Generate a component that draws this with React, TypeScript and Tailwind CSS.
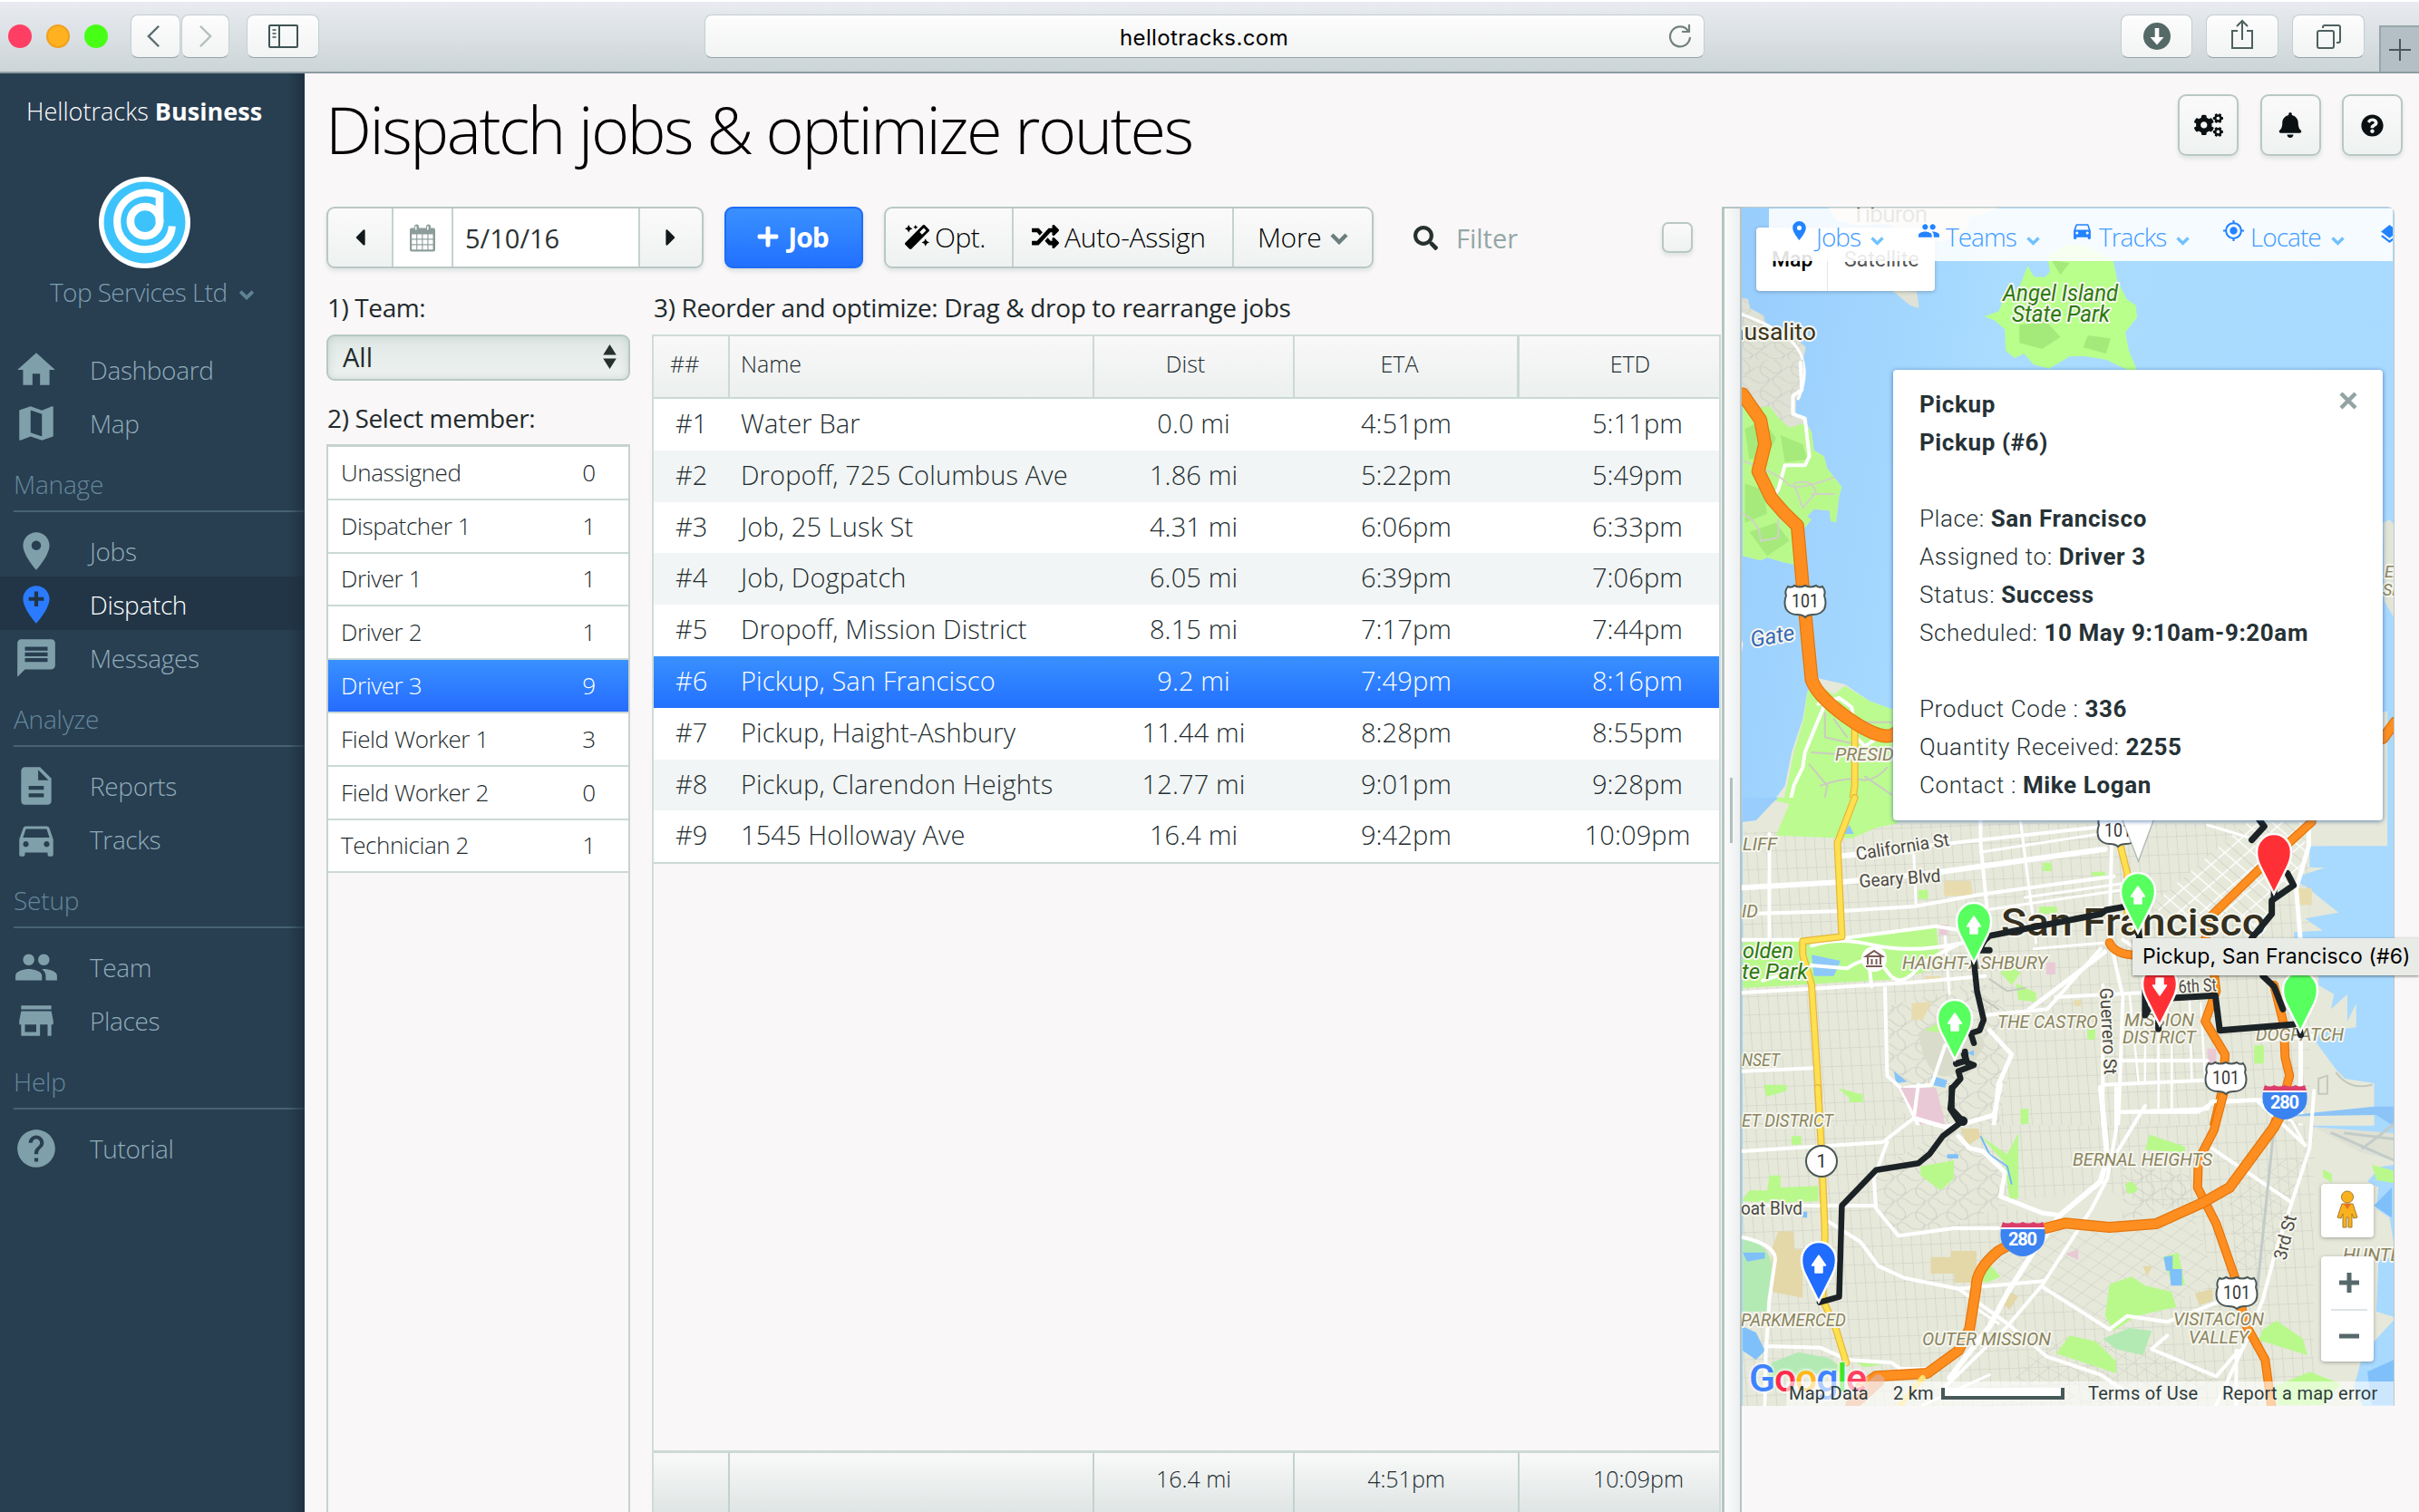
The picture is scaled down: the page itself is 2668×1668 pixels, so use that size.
import React from "react";
import { FaCogs, FaBell, FaQuestionCircle, FaMagic, FaRandom, FaSearch, FaCaretLeft, FaCaretRight, FaPlus } from "react-icons/fa";

const PATHS: Record<string, string> = {
  home: "M10 20v-6h4v6h5v-8h3L12 3 2 12h3v8z",
  map: "M20.5 3l-.16.03L15 5.1 9 3 3.36 4.9c-.21.07-.36.25-.36.48V20.5c0 .28.22.5.5.5l.16-.03L9 18.9l6 2.1 5.64-1.9c.21-.07.36-.25.36-.48V3.5c0-.28-.22-.5-.5-.5zM15 19l-6-2.11V5l6 2.11V19z",
  place: "M12 2C8.13 2 5 5.13 5 9c0 5.25 7 13 7 13s7-7.75 7-13c0-3.87-3.13-7-7-7zm0 9.5c-1.38 0-2.5-1.12-2.5-2.5s1.12-2.5 2.5-2.5 2.5 1.12 2.5 2.5-1.12 2.5-2.5 2.5z",
  placeAdd: "M12 2C8.14 2 5 5.14 5 9c0 5.25 7 13 7 13s7-7.75 7-13c0-3.86-3.14-7-7-7zm4 8h-3v3h-2v-3H8V8h3V5h2v3h3v2z",
  message: "M20 2H4c-1.1 0-1.99.9-1.99 2L2 22l4-4h14c1.1 0 2-.9 2-2V4c0-1.1-.9-2-2-2zm-2 12H6v-2h12v2zm0-3H6V9h12v2zm0-3H6V6h12v2z",
  report: "M14 2H6c-1.1 0-1.99.9-1.99 2L4 20c0 1.1.89 2 1.99 2H18c1.1 0 2-.9 2-2V8l-6-6zm2 16H8v-2h8v2zm0-4H8v-2h8v2zm-3-5V3.5L18.5 9H13z",
  car: "M18.92 6.01C18.72 5.42 18.16 5 17.5 5h-11c-.66 0-1.21.42-1.42 1.01L3 12v8c0 .55.45 1 1 1h1c.55 0 1-.45 1-1v-1h12v1c0 .55.45 1 1 1h1c.55 0 1-.45 1-1v-8l-2.08-5.99zM6.5 16c-.83 0-1.5-.67-1.5-1.5S5.67 13 6.5 13s1.5.67 1.5 1.5S7.33 16 6.5 16zm11 0c-.83 0-1.5-.67-1.5-1.5s.67-1.5 1.5-1.5 1.5.67 1.5 1.5-.67 1.5-1.5 1.5zM5 11l1.5-4.5h11L19 11H5z",
  people: "M16 11c1.66 0 2.99-1.34 2.99-3S17.66 5 16 5c-1.66 0-3 1.34-3 3s1.34 3 3 3zm-8 0c1.66 0 2.99-1.34 2.99-3S9.66 5 8 5C6.34 5 5 6.34 5 8s1.34 3 3 3zm0 2c-2.33 0-7 1.17-7 3.5V19h14v-2.5c0-2.33-4.67-3.5-7-3.5zm8 0c-.29 0-.62.02-.97.05 1.16.84 1.97 1.97 1.97 3.45V19h6v-2.5c0-2.33-4.67-3.5-7-3.5z",
  store: "M20 4H4v2h16V4zm1 10v-2l-1-5H4l-1 5v2h1v6h10v-6h4v6h2v-6h1zm-9 4H6v-4h6v4z",
  help: "M12 2C6.48 2 2 6.48 2 12s4.48 10 10 10 10-4.48 10-10S17.52 2 12 2zm1 17h-2v-2h2v2zm2.07-7.75l-.9.92C13.45 12.9 13 13.5 13 15h-2v-.5c0-1.1.45-2.1 1.17-2.83l1.24-1.26c.37-.36.59-.86.59-1.41 0-1.1-.9-2-2-2s-2 .9-2 2H8c0-2.21 1.79-4 4-4s4 1.79 4 4c0 .88-.36 1.68-.93 2.25z",
  locate: "M12 8c-2.21 0-4 1.79-4 4s1.79 4 4 4 4-1.79 4-4-1.79-4-4-4zm8.94 3A8.994 8.994 0 0 0 13 3.06V1h-2v2.06A8.994 8.994 0 0 0 3.06 11H1v2h2.06A8.994 8.994 0 0 0 11 20.94V23h2v-2.06A8.994 8.994 0 0 0 20.94 13H23v-2h-2.06zM12 19c-3.87 0-7-3.13-7-7s3.13-7 7-7 7 3.13 7 7-3.13 7-7 7z",
  layers: "M11.99 18.54l-7.37-5.73L3 14.07l9 7 9-7-1.63-1.27-7.38 5.74zM12 16l7.36-5.73L21 9l-9-7-9 7 1.63 1.27L12 16z",
};

function Icon({ name, className }: { name: string; className: string }) {
  return (
    <svg viewBox="0 0 24 24" fill="currentColor" className={className}>
      <path d={PATHS[name]} />
    </svg>
  );
}

function Chevron({ className }: { className: string }) {
  return (
    <svg viewBox="0 0 20 14" fill="none" stroke="currentColor" strokeWidth="4.4" className={className}>
      <path d="M2 3l8 8 8-8" />
    </svg>
  );
}

/* ---------- Browser chrome ---------- */

const chromeBtn = "flex h-[48px] items-center justify-center rounded-[8px] border border-[#c3cfd1] border-b-[#93a5a6] bg-linear-to-b from-[#fdfdfd] to-[#f2f3f3] text-[#5a6e6e]";

function BrowserBar() {
  return (
    <div className="flex h-[81px] w-full shrink-0 border-t-2 border-b-2 border-t-white border-b-[#8d9ca3] bg-linear-to-b from-[#e9ebf0] to-[#ccd5d7] pt-[14px]">
      <div className="mt-[11px] ml-[9px] flex gap-[16px]">
        <div className="size-[26px] rounded-full bg-[#ff3e63]" />
        <div className="size-[26px] rounded-full border-2 border-[#f0a020] bg-[#ffb11f]" />
        <div className="size-[26px] rounded-full bg-[#47ff16]" />
      </div>
      <div className={`${chromeBtn} ml-[25px] w-[55px]`}>
        <svg viewBox="0 0 16 26" className="-ml-[4px] h-[26px] w-[15px]" fill="none" stroke="currentColor" strokeWidth="2.6"><path d="M14 1L2 13l12 12" /></svg>
      </div>
      <div className={`${chromeBtn} ml-px w-[53px]`}>
        <svg viewBox="0 0 16 26" className="h-[26px] w-[15px] text-[#b4bfc0]" fill="none" stroke="currentColor" strokeWidth="2.6"><path d="M2 1l12 12L2 25" /></svg>
      </div>
      <div className={`${chromeBtn} ml-[19px] w-[80px]`}>
        <svg viewBox="0 0 33 26" className="h-[26px] w-[33px]" fill="none" stroke="#3f5353" strokeWidth="2"><rect x="1" y="1" width="31" height="24" rx="1" /><path d="M12 1v24" /><path d="M4.5 6h4M4.5 10h4M4.5 14h4" strokeWidth="1.6" /></svg>
      </div>
      <div className={`${chromeBtn} relative ml-[425px] w-[1103px]`}>
        <span className="pt-[3px] pr-[1px] font-[Inter] text-[24px] tracking-[0.4px] text-black">hellotracks.com</span>
        <svg viewBox="0 0 28 30" className="absolute right-[12px] h-[30px] w-[28px]" fill="none" stroke="#74817f" strokeWidth="2.2"><path d="M23 9A11 11 0 1 0 25 16" /><path d="M24 2v8h-8" /></svg>
      </div>
      <div className={`${chromeBtn} ml-[459px] w-[79px]`}>
        <svg viewBox="0 0 30 30" className="size-[30px]"><circle cx="15" cy="15" r="15" fill="#556966" /><path d="M12.700 6h4.600v10h5.200L15 24.500 7.500 16h5.200z" fill="#fff" /></svg>
      </div>
      <div className={`${chromeBtn} ml-[15px] w-[80px]`}>
        <svg viewBox="0 0 26 34" className="-mt-[4px] h-[34px] w-[26px]" fill="none" stroke="#4d615f" strokeWidth="2"><path d="M8 13H2v19h22V13h-6M13 23V2M7 8l6-6 6 6" /></svg>
      </div>
      <div className={`${chromeBtn} ml-[15px] w-[80px]`}>
        <svg viewBox="0 0 27 27" className="size-[27px]" fill="none" stroke="#4d615f" strokeWidth="2"><rect x="1" y="7" width="18" height="19" rx="2" /><path d="M7 4V3q0-2 2-2h15q2 0 2 2v15q0 2-2 2h-2" /></svg>
      </div>
      <div className="mt-[12px] ml-[16px] flex flex-1 items-center justify-center border-t-2 border-l-2 border-[#97a6aa] bg-[#b3bfc4]">
        <svg viewBox="0 0 24 24" className="size-[24px]" stroke="#47575a" strokeWidth="2"><path d="M12 0v24M0 12h24" /></svg>
      </div>
    </div>
  );
}

/* ---------- Sidebar ---------- */

function NavItem({ icon, label, active }: { icon: string; label: string; active?: boolean }) {
  return (
    <div className={`flex h-[59px] items-center pt-[3px] pl-[15px] ${active ? "bg-[#213546]" : ""}`}>
      <Icon name={icon} className={`size-[50px] ${active ? "text-[#2a7bff]" : "text-[#7fa0ab]"}`} />
      <span className={`ml-[34px] text-[28px] font-light tracking-[-0.35px] ${active ? "text-white" : "text-[#8fadb9]"}`}>{label}</span>
    </div>
  );
}

function NavHeading({ label }: { label: string }) {
  return (
    <div className="h-[82px]">
      <div className="ml-[15px] h-[70px] border-b-2 border-[#476373] pt-[20px] text-[28px] leading-[38px] font-light tracking-[-0.2px] text-[#64879a]">{label}</div>
    </div>
  );
}

function Sidebar() {
  return (
    <div className="relative w-[336px] shrink-0 bg-[#283e51]">
      <div className="pt-[22px] pl-[29px] text-[27px] leading-[40px] tracking-[0.02px] text-white">
        <span className="font-light">Hellotracks </span>
        <span className="font-bold">Business</span>
      </div>
      <svg viewBox="0 0 100 100" className="mt-[52px] ml-[109px] size-[101px]">
        <circle cx="50" cy="50" r="50" fill="#fff" />
        <circle cx="50" cy="50" r="44.500" fill="#3cc3fb" />
        <g fill="none" stroke="#fff">
          <path d="M66 20C56 16 44 16 35 22C24 29 20 38 20 49C20 67 33 79.500 50 79.500C67 79.500 79 70 80 54" strokeWidth="8" />
          <circle cx="50.500" cy="48.600" r="16" strokeWidth="8.500" />
          <path d="M66.300 17v33" strokeWidth="8.500" />
        </g>
      </svg>
      <div className="mt-[6px] mb-[35px] flex items-center pl-[55px] text-[28px] leading-[40px] font-light tracking-[-0.6px] text-[#7d9db0]">
        Top Services Ltd
        <Chevron className="mt-[5px] ml-[12px] h-[12px] w-[18px] text-[#5f8294]" />
      </div>
      <NavItem icon="home" label="Dashboard" />
      <NavItem icon="map" label="Map" />
      <NavHeading label="Manage" />
      <NavItem icon="place" label="Jobs" />
      <NavItem icon="placeAdd" label="Dispatch" active />
      <NavItem icon="message" label="Messages" />
      <NavHeading label="Analyze" />
      <NavItem icon="report" label="Reports" />
      <NavItem icon="car" label="Tracks" />
      <NavHeading label="Setup" />
      <NavItem icon="people" label="Team" />
      <NavItem icon="store" label="Places" />
      <NavHeading label="Help" />
      <NavItem icon="help" label="Tutorial" />
      <div className="absolute inset-y-0 right-0 w-[18px] bg-linear-to-r from-transparent to-[#1b2c3c]/70" />
    </div>
  );
}

/* ---------- Main panel ---------- */

const raised = "border-2 border-[#b9c8c5] bg-linear-to-b from-[#fbfafa] to-[#eef2f1] shadow-[0_3px_4px_rgba(120,150,145,0.2)]";

function HeaderButton({ children, className }: { children: React.ReactNode; className: string }) {
  return <div className={`${raised} flex h-[68px] w-[67px] items-center justify-center rounded-[9px] text-[#0b1113] ${className}`}>{children}</div>;
}

function Toolbar() {
  return (
    <div className="flex h-[68px] items-stretch text-[30px] font-light text-[#12191b]">
      <div className={`${raised} flex w-[416px] overflow-hidden rounded-[9px]`}>
        <div className="flex w-[70px] items-center justify-center"><FaCaretLeft className="text-[30px]" /></div>
        <div className="flex w-[68px] items-center justify-center border-x-2 border-[#c5d2cf] bg-white">
          <svg viewBox="0 0 28 30" className="h-[31px] w-[28px]">
            <rect x="0" y="4" width="28" height="26" rx="2" fill="#8d9d9b" />
            <rect x="5" y="0" width="5" height="8" rx="2.500" fill="#8d9d9b" /><rect x="18" y="0" width="5" height="8" rx="2.500" fill="#8d9d9b" />
            <path d="M6.700 2v4M19.800 2v4" stroke="#fff" strokeWidth="1.500" />
            {[0, 1, 2, 3].map((c) => [0, 1, 2].map((r) => <rect key={`${c}-${r}`} x={2.2 + c * 6.1} y={11 + r * 6} width="5" height="4.800" fill="#fff" />))}
          </svg>
        </div>
        <div className="flex w-[204px] items-center bg-white pl-[13px] pt-px text-[29px] font-normal text-[#2a3234]">5/10/16</div>
        <div className="flex flex-1 items-center justify-center border-l-2 border-[#c5d2cf]"><FaCaretRight className="text-[30px]" /></div>
      </div>
      <div className="ml-[23px] flex w-[153px] items-center justify-center gap-[9px] rounded-[9px] border-2 border-[#1f6cf5] bg-linear-to-b from-[#3a90ff] to-[#2370ff] pr-[3px] pb-[2px] font-bold text-white shadow-[0_3px_4px_rgba(120,150,145,0.25)]">
        <FaPlus className="text-[26px]" />
        <span className="tracking-[-1px]">Job</span>
      </div>
      <div className={`${raised} ml-[23px] flex w-[540px] rounded-[9px] text-black`}>
        <div className="flex w-[141px] items-center gap-[6px] border-r-2 border-[#c5d2cf] pb-[2px] pl-[21px]">
          <FaMagic className="text-[27px]" />
          <span className="tracking-[-0.5px]">Opt.</span>
        </div>
        <div className="flex w-[243px] items-center gap-[6px] border-r-2 border-[#c5d2cf] pb-[2px] pl-[20px]">
          <FaRandom className="text-[30px]" />
          <span className="tracking-[-0.3px]">Auto-Assign</span>
        </div>
        <div className="flex items-center pb-[2px] pl-[26px]">
          <span className="tracking-[-0.3px]">More</span>
          <Chevron className="mt-[3px] ml-[10px] h-[14px] w-[20px] text-[#6b7f7e]" />
        </div>
      </div>
      <div className="flex items-center pl-[44px]">
        <FaSearch className="text-[27px] text-[#26302f]" />
        <span className="ml-[20px] pt-px text-[29px] font-normal text-[#94a6a5]">Filter</span>
      </div>
      <div className={`${raised} ml-[159px] size-[34px] self-center rounded-[7px]`} />
    </div>
  );
}

const MEMBERS: [string, number][] = [
  ["Unassigned", 0], ["Dispatcher 1", 1], ["Driver 1", 1], ["Driver 2", 1],
  ["Driver 3", 9], ["Field Worker 1", 3], ["Field Worker 2", 0], ["Technician 2", 1],
];

function Members() {
  return (
    <div className="flex w-[335px] flex-col">
      <div className="flex h-[73px] items-center pt-[12px] pl-px text-[28px] leading-[38px] tracking-[-0.4px] text-[#1f2a2c]">1) Team:</div>
      <div className="flex h-[51px] items-center justify-between rounded-[9px] border-2 border-[#b7c8c4] bg-linear-to-b from-[#dfe7e4] to-[#eff3f1] pr-[13px] pb-[2px] pl-[16px] text-[29px] text-[#1f2a2c] shadow-[inset_0_0_10px_rgba(140,165,160,0.35)]">
        All
        <svg viewBox="0 0 14 26" className="h-[27px] w-[15px]" fill="#25302f"><path d="M7 0l7 11H0zM7 26l7-11H0z" /></svg>
      </div>
      <div className="flex h-[70px] items-center pt-[12px] pl-px text-[28px] leading-[38px] tracking-[-0.35px] text-[#1f2a2c]">2) Select member:</div>
      <div className="flex flex-1 flex-col border-x-2 border-t-3 border-[#c6d3d0]">
        {MEMBERS.map(([name, count]) => (
          <div
            key={name}
            className={`flex h-[58.8px] items-center justify-between border-b-2 border-[#cbd9d5] pr-[36px] pl-[14px] text-[26px] font-light ${
              name === "Driver 3" ? "bg-linear-to-b from-[#3a90ff] to-[#266bff] text-white" : "bg-white text-[#222b2e]"
            }`}
          >
            <span className="tracking-[-0.4px]">{name}</span>
            <span>{count}</span>
          </div>
        ))}
      </div>
    </div>
  );
}

const JOBS = [
  ["#1", "Water Bar", "0.0 mi", "4:51pm", "5:11pm"],
  ["#2", "Dropoff, 725 Columbus Ave", "1.86 mi", "5:22pm", "5:49pm"],
  ["#3", "Job, 25 Lusk St", "4.31 mi", "6:06pm", "6:33pm"],
  ["#4", "Job, Dogpatch", "6.05 mi", "6:39pm", "7:06pm"],
  ["#5", "Dropoff, Mission District", "8.15 mi", "7:17pm", "7:44pm"],
  ["#6", "Pickup, San Francisco", "9.2 mi", "7:49pm", "8:16pm"],
  ["#7", "Pickup, Haight-Ashbury", "11.44 mi", "8:28pm", "8:55pm"],
  ["#8", "Pickup, Clarendon Heights", "12.77 mi", "9:01pm", "9:28pm"],
  ["#9", "1545 Holloway Ave", "16.4 mi", "9:42pm", "10:09pm"],
];

const columns = "grid grid-cols-[84px_402px_221px_248px_1fr]";

function JobsTable() {
  return (
    <div className="flex w-[1179px] flex-col">
      <div className="flex h-[73px] items-center pt-[12px] pl-[2px] text-[28px] leading-[38px] tracking-[-0.35px] text-[#1f2a2c]">
        3) Reorder and optimize: Drag &amp; drop to rearrange jobs
      </div>
      <div className="flex flex-1 flex-col border-x-2 border-t-2 border-[#cfdcd9] text-[#222d30]">
        <div className={`${columns} h-[69px] items-stretch border-b-2 border-[#cbd9d5] bg-linear-to-b from-[#f9f8f8] to-[#ecf0ef] text-[25px] leading-[61px] font-light`}>
          <div className="border-r-2 border-[#cbd9d5] pl-[18px]">##</div>
          <div className="border-r-2 border-[#cbd9d5] pl-[12px]">Name</div>
          <div className="border-r-2 border-[#cbd9d5] pr-[18px] text-center">Dist</div>
          <div className="border-r-3 border-[#cbd9d5] pr-[14px] text-center">ETA</div>
          <div className="pl-[24px] text-center">ETD</div>
        </div>
        {JOBS.map(([num, name, dist, eta, etd], i) => (
          <div
            key={num}
            className={`${columns} h-[56.8px] text-[29px] leading-[54px] font-light tracking-[0.12px] ${
              i === 5 ? "bg-linear-to-b from-[#3a90ff] to-[#2470ff] text-white" : i % 2 ? "bg-[#f2f5f5]" : "bg-white"
            }`}
          >
            <div className="pl-[24px]">{num}</div>
            <div className="pl-[12px]">{name}</div>
            <div className="pr-[2px] text-center">{dist}</div>
            <div className="pr-[2px] text-center">{eta}</div>
            <div className="pl-[40px] text-center">{etd}</div>
          </div>
        ))}
        <div className="flex-1 border-t-2 border-[#cbd9d5]" />
        <div className={`${columns} h-[68px] border-t-3 border-[#cbd9d5] bg-linear-to-b from-[#f9f9f9] to-[#dfe5e4] text-[25px] leading-[56px]`}>
          <div className="border-r-2 border-[#c3d2ce]" />
          <div className="border-r-2 border-[#c3d2ce]" />
          <div className="border-r-2 border-[#c3d2ce] text-center font-light">16.4 mi</div>
          <div className="border-r-2 border-[#c3d2ce] text-center font-light">4:51pm</div>
          <div className="pl-[42px] text-center font-light">10:09pm</div>
        </div>
      </div>
    </div>
  );
}

/* ---------- Map ---------- */

/* Map geometry is stored in tile units; every tile strip starts at its own page offset. */
function Tile({ y, children }: { y: number; children: React.ReactNode }) {
  return <g transform={`translate(1900 ${y}) scale(0.4904 0.33333)`}>{children}</g>;
}

function Line({ d, c = "#fff", w = 3 }: { d: string; c?: string; w?: number }) {
  return <path d={d} fill="none" stroke={c} strokeWidth={w} strokeLinejoin="round" strokeLinecap="round" vectorEffect="non-scaling-stroke" />;
}

function Highway({ d, w = 10 }: { d: string; w?: number }) {
  return (
    <>
      <Line d={d} c="#e5760c" w={w} />
      <Line d={d} c="#ff8e20" w={w - 2.5} />
    </>
  );
}

function YellowRoad({ d, w = 8 }: { d: string; w?: number }) {
  return (
    <>
      <Line d={d} c="#e5b83c" w={w} />
      <Line d={d} c="#ffe04f" w={w - 2.5} />
    </>
  );
}

function Label({ x, y, size = 20, fill = "#8a8460", italic = true, weight = 400, rotate = 0, length, children }: {
  x: number; y: number; size?: number; fill?: string; italic?: boolean; weight?: number; rotate?: number; length?: number; children: React.ReactNode;
}) {
  return (
    <text
      x={x} y={y} fontSize={size} fill={fill} fontStyle={italic ? "italic" : "normal"} fontWeight={weight}
      stroke="#f6f6ee" strokeWidth="4" strokeLinejoin="round" paintOrder="stroke"
      transform={rotate ? `rotate(${rotate} ${x} ${y})` : undefined}
      textLength={length} lengthAdjust="spacingAndGlyphs"
    >
      {children}
    </text>
  );
}

function UsShield({ x, y, n = "101" }: { x: number; y: number; n?: string }) {
  return (
    <g transform={`translate(${x} ${y})`}>
      <path d="M-19 -15q4 2 7 -1q6 3 12 0q6 3 12 0q3 3 7 1q4 5 2 10q3 8 0 15q-4 6 -12 6q-6 0 -9 3q-3 -3 -9 -3q-8 0 -12 -6q-3 -7 0 -15q-2 -5 2 -10z" fill="#fff" stroke="#4b5756" strokeWidth="2" />
      <text x="0" y="8" textAnchor="middle" fontSize="21" fill="#333" textLength="30" lengthAdjust="spacingAndGlyphs">{n}</text>
    </g>
  );
}

function Interstate({ x, y }: { x: number; y: number }) {
  return (
    <g transform={`translate(${x} ${y})`}>
      <path d="M-24 -10h48q3 18 -9 25q-8 6 -15 6q-7 0 -15 -6q-12 -7 -9 -25z" fill="#3b83f0" />
      <path d="M-22 -17q6 3 10 0q6 3 12 0q6 3 12 0q4 3 10 0l2 6h-48z" fill="#dc3d6a" />
      <path d="M-24 -10h48" stroke="#fff" strokeWidth="2" />
      <text x="0" y="9" textAnchor="middle" fontSize="20" fontWeight="700" fill="#fff" textLength="32">280</text>
    </g>
  );
}

function Pin({ x, y, fill, arrow }: { x: number; y: number; fill: string; arrow?: "up" | "down" }) {
  return (
    <g transform={`translate(${x} ${y})`}>
      <path d="M0 0L-15 -30C-18 -36 -19 -40 -19 -46A19 20 0 0 1 19 -46C19 -40 18 -36 15 -30z" fill={fill} stroke="#fff" strokeWidth="2.500" />
      {arrow && (
        <path
          d="M0 -51l7.500 11h-3.500v8h-8v-8h-3.500z"
          transform={arrow === "down" ? "rotate(180 0 -42)" : undefined}
          fill="#fff" stroke="#fff" strokeWidth="1.500" strokeLinejoin="round"
        />
      )}
    </g>
  );
}

function MapCanvas() {
  return (
    <svg viewBox="1921 229 720 1322" className="h-[1322px] w-[720px] font-[Roboto]">
      <defs>
        <pattern id="grid" width="22" height="60" patternUnits="userSpaceOnUse" patternTransform="rotate(-3)">
          <path d="M0 0V60M0 0H22" fill="none" stroke="#c9cbc1" strokeWidth="2.200" />
        </pattern>
        <pattern id="diag" width="34" height="34" patternUnits="userSpaceOnUse" patternTransform="rotate(40)">
          <path d="M0 0V34M0 0H34" fill="none" stroke="#c9cbc1" strokeWidth="2.200" />
        </pattern>
        <pattern id="soma" width="50" height="40" patternUnits="userSpaceOnUse" patternTransform="rotate(-52) skewX(-14)">
          <path d="M0 0V40M0 0H50" fill="none" stroke="#fff" strokeWidth="7" />
          <path d="M25 0V40" fill="none" stroke="#cfd1c7" strokeWidth="2" />
        </pattern>
        <pattern id="hills" width="70" height="80" patternUnits="userSpaceOnUse">
          <path d="M0 20q20 -18 35 5t35 -5M0 60q18 18 36 -4t34 4M20 0q-14 30 6 44t-6 36M55 0q14 24 -4 42t4 38" fill="none" stroke="#cdcfc5" strokeWidth="2.200" />
        </pattern>
        <linearGradient id="water" x1="0" x2="1" y1="0" y2="0.300">
          <stop offset="0" stopColor="#98cdfd" />
          <stop offset="0.400" stopColor="#aadcff" />
          <stop offset="1" stopColor="#a8d9ff" />
        </linearGradient>
      </defs>
      <rect x="1921" y="229" width="720" height="1322" fill="url(#water)" />

      {/* Tiburon, Angel Island and Sausalito */}
      <g transform="translate(1880 0) scale(0.5033 0.33333)">
        <path d="M272 688H645L615 705L580 720L575 760L520 800L470 790L400 740L330 745L290 730z" fill="#ece4d8" />
        <path d="M410 960L465 965L470 1020L450 1010z" fill="#e0e2d5" />
        <path d="M708 880L722 915L745 918L757 900L752 850L790 810L830 810L870 840L895 860L905 930L925 990L945 1010L948 1050L922 1100L930 1160L948 1226H930L880 1190L830 1178L800 1180L755 1220L720 1205L700 1170L680 1185L660 1160L658 1090L635 1060L613 1048L645 1030L655 990L690 950z" fill="#b9ff8c" />
        <path d="M690 1075l60 -10l30 50l-40 40l-50 -20zM840 1110l50 10l-10 50l-50 -20zM760 860l40 10l-20 40z" fill="#a4ea7a" />
        <path d="M82 985L95 990L100 1020L130 1045L135 1080L160 1110L205 1125L222 1150L215 1200L218 1270L210 1320H82z" fill="#dfe1d5" />
        <path d="M82 985L95 990L100 1020L130 1045L135 1080L160 1110L205 1125L222 1150L215 1200L218 1270L210 1320H82z" fill="url(#hills)" />
        <Line d="M82 1040Q190 1100 210 1170T205 1320" />
      </g>

      {/* Marin headlands, Golden Gate bridge and Presidio */}
      <Tile y={400}>
        <path d="M45 -10H182L178 90L165 110V175L185 190L200 230L205 290L228 310L235 350L268 412L262 440L255 528L243 525L240 490L205 485L190 510L200 520L185 545L165 560V670L135 660L100 645L85 655L45 640z" fill="#dfe1d5" />
        <path d="M45 -10H182L178 90L165 110V175L130 200L45 130z" fill="url(#hills)" />
        <path d="M45 120L75 150L105 145L130 190L150 215L185 200L200 230L205 290L228 310L235 350L268 412L262 440L255 528L243 525L240 490L205 485L190 510L200 520L185 545L165 560V670L135 660L100 645L85 655L45 640z" fill="#b9f98c" />
        <path d="M50 220l40 -30l30 60l-20 60l-40 10zM130 240l50 30l10 50l-50 10zM50 400l40 20l10 80l-50 30zM60 560l60 -30l30 60l-50 50z" fill="#a5ea7b" />
        <Line d="M175 0L178 90L158 110V170L185 185L195 310L185 340H140L125 420L115 440" w={4} />
        <Line d="M45 325Q130 370 145 400T250 380M160 400q40 -20 50 30l-30 50z M200 435h50M45 500q40 30 40 90l40 -10v-60" c="#cfd2c5" w={2} />
        <path d="M215 1045L275 1065L330 1120L395 1155L1500 1155V1600H45V1520L90 1490L110 1460L140 1400L155 1290L180 1180L190 1090z" fill="#e6e8da" />
        <path d="M190 1090L210 1060L250 1100L275 1070L330 1120L395 1155V1515L345 1560H120L145 1400L160 1290L182 1180z" fill="#bcfb90" />
        <path d="M1495 1150h20v450h-20z" fill="#a8d9ff" />
        <Line d="M215 1130L262 1110L290 1140L300 1240L320 1270L350 1240M230 1130L210 1200L185 1290L180 1340L160 1400L145 1500L130 1545L100 1560" w={4} />
        <Line d="M230 1160v80l60 20M300 1190h80M200 1290l100 10M220 1400q60 -30 90 -20t60 -40M250 1180l30 60M195 1330l40 70l-10 80l20 60M320 1370l60 60" c="#c9ccc0" w={2} />
        <YellowRoad d="M297 1215V1400L290 1470L262 1560" />
        <Highway d="M45 105L85 190L95 270L80 360L110 450L140 500L168 540L180 740L190 900L200 1050Q215 1110 290 1185T390 1225" w={15} />
        <Highway d="M1512 1190L1485 1245" w={12} />
        <path d="M1485 530L1500 520L1512 540V850L1500 820L1488 790z" fill="#e2e4d8" />
      </Tile>

      {/* Northern half of the city */}
      <Tile y={880}>
        <path d="M45 80L75 75L110 20L130 0H1320V75L1345 95L1325 112L1360 122V160H1320V230L1355 232L1298 258L1290 280L1310 292L1385 380L1310 400L1350 440L1285 445V580H1340V620L1375 650L1368 700L1405 650V740L1425 680V760L1350 775L1330 800L1380 900L1400 930L1465 945V1085H45z" fill="#e6e8da" />
        <path d="M45 110H1320V1085H45z" fill="url(#grid)" />
        <path d="M330 85h560v0h430v20H330z" fill="url(#grid)" />
        <path d="M370 690L480 650L580 600L640 700L610 780L650 850L620 1085H420L370 920z" fill="#e6e8da" />
        <path d="M370 690L480 650L580 600L640 700L610 780L650 850L620 1085H420L370 920z" fill="url(#hills)" />
        <path d="M440 780q40 -60 90 -40t60 80q-30 80 -80 100t-70 -140z" fill="#d9dccb" />
        <path d="M970 350L1180 80H1310V230L1200 430L1110 400L1000 420z" fill="#e6e8da" />
        <path d="M970 350L1180 80H1310V230L1200 430L1110 400L1000 420z" fill="url(#soma)" />
        <path d="M90 0H385L395 85L345 100L290 135L120 125L150 20z" fill="#bcfb90" />
        <path d="M45 80L75 75L110 20L125 0H45z" fill="#98cdfd" />
        <path d="M45 480L260 460L480 425L490 560L400 600L45 630z" fill="#b9f98c" />
        <path d="M200 520l65 20l-15 50h-45zM270 120l15 -30l10 30z" fill="#8cc8fa" />
        <path d="M720 215h20v28h-20zM440 305h22v30h-22zM712 360h40v24h-40zM640 540l30 40l-20 40l-25 -40zM660 615l45 30v30l-40 -5zM830 245h30v14h-30zM1195 820h22v60h-22zM92 950h52v20l-45 20zM285 980h30v28h-30zM455 770l50 -40v50zM820 750h18v50h-18z" fill="#b9f98c" />
        <path d="M498 275h60l5 50h-65zM1285 300l40 0v55h-30zM790 670h16v20h-16zM425 680l45 -5l-20 60h-25zM455 590h35v20h-35z" fill="#e8dcae" />
        <path d="M410 965l70 -5l20 120h-60zM728 545h20v40h-20zM488 420h18v34h-18zM1090 830h20v60h-20z" fill="#eac9d6" />
        <path d="M385 905l30 35l-25 5zM470 920l35 15l-5 25l-30 -10zM550 845l15 -10v20z" fill="#86c4f8" />
        <Line d="M45 298L260 280L470 250L860 170" w={6} />
        <Line d="M45 470H180M270 465L480 425L580 450M45 385L270 375L430 360L580 320L880 260M45 645L200 632L420 612L590 590M265 195L430 180M270 190L860 95M580 75V150L600 450L640 440M330 560L335 625M200 490q60 -30 130 -5t150 10t120 -40M90 605l110 -50l80 10q60 -60 90 10t80 -30l80 -60" w={4} />
        <Line d="M670 80l35 400M700 500l160 -20M860 80l-5 60M680 330l240 -50M580 180L870 115M1090 90l90 40M600 370l300 -65M500 460l10 190M430 190l5 170" w={3} />
        <Line d="M1318 80V160L1290 300L1300 480V1085M1215 800L1325 790" w={5} />
        <Line d="M875 130l-5 330l30 200l-10 425M850 500L730 700L590 720M855 620v465" w={4} />
        <Line d="M915 650l20 290M950 730v210M980 770v255M1010 790v235M1050 660l5 270M1075 680l10 250" w={2.5} />
        <Line d="M860 510L690 700M600 770L650 850L620 950L610 1085" w={5} />
        <Line d="M750 660l200 -15M855 950l230 -15M890 1040h180l30 -30l110 -10M900 470l100 100h150M870 870h220M45 905L205 895M365 630L370 920L400 960L440 1085M500 820l-30 130l-60 10M105 120v340" w={4} />
        <Line d="M600 600l40 40l40 -10M560 640l60 60M1340 930l20 -10v60h-20zM1380 910q30 60 80 40" c="#c4c9bf" w={2} />
        <YellowRoad d="M297 0L258 150L268 460L180 475V520L200 620L215 960L218 1085" />
        <YellowRoad d="M893 150L910 250V450" />
        <Highway d="M1325 80L1205 240L1100 390L1085 470" w={10} />
        <Highway d="M870 480Q885 530 960 520L1100 520L1110 640L1085 740L1130 850L1125 960L1105 1085" w={10} />
        <Highway d="M1240 620L1262 750L1265 860L1275 920L1262 990L1240 1085" w={10} />
      </Tile>

      {/* Southern half of the city */}
      <Tile y={1200}>
        <path d="M45 124H1465V60L1250 100L1330 130L1380 140L1430 210L1510 240V255L1480 262L1450 310L1475 330L1470 400L1500 430L1512 540V560L1475 570L1470 740L1512 760V765L1440 880L1420 990L1440 1055H45z" fill="#e6e8da" />
        <path d="M45 124H1330V1055H45z" fill="url(#grid)" />
        <path d="M620 380L860 340L1060 430L1110 640L960 760L860 800L720 640L560 660L560 600L730 440z" fill="#e6e8da" />
        <path d="M620 480L860 440L1060 430L1110 640L960 760L860 800L720 640L620 660zM1130 330L1320 200L1240 560L1160 620zM720 820L1000 860L1120 950L1060 1050H620z" fill="url(#diag)" />
        <path d="M345 270L520 130L630 260L620 400L500 460L390 490L345 400z" fill="#e6e8da" />
        <path d="M345 270L520 130L630 260L620 400L500 460L390 490L345 400zM900 250l150 40l10 90l-160 60z" fill="url(#hills)" />
        <path d="M1330 130L1510 150V240L1430 210z" fill="#dfe1d5" />
        <path d="M1250 95L1465 62H1512V130L1470 90z" fill="#8cc4f8" />
        <path d="M45 370L60 340H100L105 290H130V330L215 325V375L130 380L45 375z" fill="#b9f98c" />
        <path d="M45 500Q100 510 110 580T100 740H45zM110 910l60 -35l70 20l40 45l-180 20z" fill="#b3eab4" />
        <path d="M445 260l75 -20v60l-30 40l-45 -50zM155 160h22v28h-22zM580 160l60 60l25 -70v215l-20 5l-10 -120zM670 70h18v50h-18zM960 155l50 25l30 15v20l-90 -10zM905 320q15 -20 25 5t-20 25zM545 625l50 -50l30 50l-30 20zM870 650l50 -25l30 30l60 20l10 50l-90 30l-50 50l-20 -50zM750 880l30 -60l60 20l45 65v40l-60 -30zM990 560l35 -15l15 110l-30 -10zM1215 800l30 -30l60 60l10 55l-110 -50zM1240 990l80 -50l70 40l-40 70h-100zM300 910l60 5l-40 10zM1460 255l50 20v40l-40 -10zM1350 270l20 15v30l-20 -20zM260 1l50 20v20l-20 0z" fill="#b9f98c" />
        <path d="M855 830l60 -35l50 10l-20 80l-60 -20z" fill="#b3eab4" />
        <path d="M580 160L600 220L640 260L650 320" fill="none" stroke="#6fb8f8" strokeWidth="4" />
        <path d="M505 220h25v14h-25zM992 560l20 -5v50h-15zM1005 600h28v55h-25zM180 410h10v20h-10zM45 545h50v20l-40 10zM45 790l30 20l20 60l-20 30l-30 -30zM1465 390l40 -60v100zM1450 940l60 -40v150h-50z" fill="#7fc0fa" />
        <path d="M125 475h35v60h20v160l-70 -20v-140zM468 560h45v-20h58v105h-50v-30h-53zM535 135h40l5 30l-30 25zM640 670l25 20l-20 45l-15 -20zM1062 680l40 -15v40l-30 15zM945 590l20 0l-10 35z" fill="#e4d7a8" />
        <path d="M400 0h75l25 100l-60 10zM770 550l30 -15v35z" fill="#eac9d6" />
        <Line d="M45 210L360 180L430 100L440 -10M45 390H340M370 180L340 300L345 400L395 490L520 465H620M235 440L310 510L350 590L410 630L530 665L720 640M45 495Q120 520 118 570L105 700L97 880L95 1050M97 855L220 860L280 900L380 910L400 930H480" w={4} />
        <Line d="M430 100L500 130L540 120L610 90L625 -10M530 160L555 200L585 210L635 280L625 360L720 415L750 420" w={5} />
        <Line d="M850 0L865 230L850 310L760 420L700 540L640 680L600 790L510 960" w={6} />
        <Line d="M885 0V140L865 300L830 400L720 650L640 790L500 990M890 80L1090 70L1100 45L1200 40L1310 190M950 60L880 230" w={4} />
        <Line d="M530 665L640 780L730 890L850 950L900 1000M720 660L870 800L910 755L1000 775L1130 700M1100 200L1280 380M1330 10L1320 200L1240 560L1215 700L1180 830L1110 1050M1000 820L965 865L1110 955L1160 870M1155 870V1050" w={4} />
        <Line d="M1205 50L1280 110L1310 190M560 660L560 720L620 780M450 1050L600 950" w={3} />
        <Line d="M1200 700L1240 130L1290 0M1370 150l140 90M1400 150l110 20M1440 200l70 -80" c="#c3cbc8" w={3} />
        <YellowRoad d="M214 0L222 200L230 480L225 700L255 800L278 910" />
        <Highway d="M1130 0L1105 140L1070 240L1068 330L1110 450L1155 640L1175 780L1220 900L1235 1060" w={10} />
        <Highway d="M1265 60L1240 130L1140 330L1080 380L975 450L870 462L770 448L700 475L620 540Q570 600 570 660L555 800L530 870L460 945L345 955L310 990" w={12} />
        <Line d="M290 1050L350 970" c="#e8a678" w={14} />
        <Line d="M400 1050L450 960" c="#ffe27a" w={6} />
      </Tile>

      {/* Place names */}
      <Label x={2209} y={332} size={26} fill="#2c7a0e" length={127}>Angel Island</Label>
      <Label x={2219} y={355} size={26} fill="#2c7a0e" length={108}>State Park</Label>
      <Label x={1909} y={375} size={26} fill="#3a341c" italic={false} length={94}>ausalito</Label>
      <text x="2042" y="245" fontSize="26" fill="#4d4636" textLength="84">Tiburon</text>
      <Label x={1932} y={714} size={24} fill="#3268b8" rotate={-10} length={49}>Gate</Label>
      <Label x={1909} y={720} size={23} fill="#3268b8">n</Label>
      <Label x={2024} y={839} size={20} length={70}>PRESIDI</Label>
      <Label x={1922} y={938} size={20} length={38}>LIFF</Label>
      <Label x={2048} y={949} size={20} fill="#4c4a44" italic={false} rotate={-9} length={104}>California St</Label>
      <Label x={2051} y={979} size={20} fill="#4c4a44" italic={false} rotate={-4} length={90}>Geary Blvd</Label>
      <Label x={1921} y={1012} size={20}>ID</Label>
      <Label x={2207} y={1032} size={42} fill="#35301f" italic={false} weight={500} length={292}>San Francisco</Label>
      <Label x={1922} y={1057} size={23} fill="#2c7a0e" length={56}>olden</Label>
      <Label x={1921} y={1080} size={23} fill="#2c7a0e" length={73}>te Park</Label>
      <Label x={2098} y={1069} size={20} length={160}>HAIGHT-ASHBURY</Label>
      <Label x={2203} y={1134} size={20} length={111}>THE CASTRO</Label>
      <Label x={2343} y={1132} size={20} length={77}>MISSION</Label>
      <Label x={2341} y={1151} size={20} length={81}>DISTRICT</Label>
      <Label x={2488} y={1148} size={20} length={97}>DOGPATCH</Label>
      <Label x={1921} y={1176} size={20} length={42}>NSET</Label>
      <Label x={1921} y={1243} size={20} length={101}>ET DISTRICT</Label>
      <Label x={2286} y={1286} size={20} length={154}>BERNAL HEIGHTS</Label>
      <Label x={1920} y={1340} size={20} fill="#4c4a44" italic={false} length={68}>oat Blvd</Label>
      <Label x={1920} y={1463} size={20} length={116}>PARKMERCED</Label>
      <Label x={2120} y={1484} size={20} length={142}>OUTER MISSION</Label>
      <Label x={2397} y={1462} size={20} length={100}>VISITACION</Label>
      <Label x={2414} y={1482} size={20} length={66}>VALLEY</Label>
      <Label x={2584} y={1391} size={20} length={76}>HUNTER</Label>
      <Label x={2316} y={1090} size={20} fill="#4c4a44" italic={false} rotate={87} length={96}>Guerrero St</Label>
      <Label x={2521} y={1391} size={20} fill="#4c4a44" italic={false} rotate={-76} length={50}>3rd St</Label>
      <Label x={2394} y={1096} size={20} fill="#4c4a44" italic={false} rotate={-3} length={51}>16th St</Label>
      <Label x={2630} y={637} size={18}>EA</Label>
      <Label x={2628} y={657} size={18}>SLA</Label>
      <g transform="translate(2067 1058)">
        <circle r="14" fill="#fff" /><path d="M-9 8h18M-7 6V-2M7 6V-2M-9 -3h18L0 -9zM-2.500 6V0M2.500 6V0" fill="none" stroke="#7a5a55" strokeWidth="2" />
      </g>

      <UsShield x={1991} y={662} />
      <UsShield x={2336} y={915} />
      <UsShield x={2455} y={1188} />
      <UsShield x={2467} y={1425} />
      <Interstate x={2520} y={1214} />
      <Interstate x={2231} y={1365} />
      <circle cx="2009" cy="1281" r="17" fill="#fff" stroke="#4b5756" strokeWidth="2" />
      <text x="2009" y="1288" textAnchor="middle" fontSize="20" fill="#333">1</text>

      {/* Driver route */}
      <Tile y={880}>
        <Line d="M1200 60L1218 95L1190 140M1270 250L1284 290L1235 340V385L1190 465" c="#1c2326" w={7} />
        <Line d="M1240 300L1240 330M935 430L938 480M600 505L575 505L590 470L600 457L850 385L862 372L900 362" c="#1c2326" w={7} />
        <Line d="M565 540L572 640L587 735L578 770L558 780L565 812M545 840L548 875L565 885L530 905L535 930L517 960L512 1030L530 1070" c="#1c2326" w={6.5} />
        <Line d="M525 880L548 870L543 850M950 640V720L958 700M980 765L980 740M1010 663L1108 655L1118 770L1285 750M1215 590L1240 625L1260 700M1300 785L1298 770" c="#1c2326" w={7} />
      </Tile>
      <Tile y={1200}>
        <Line d="M515 0V70L540 110L495 160L465 220L440 250L345 272L268 390L262 692L218 710" c="#1c2326" w={6.5} />
        <ellipse cx="540" cy="110" rx="11" ry="16" fill="#1c2326" />
      </Tile>

      <Pin x={2177} y={1062} fill="#57ff5f" arrow="up" />
      <Pin x={2156} y={1169} fill="#57ff5f" arrow="up" />
      <Pin x={2358} y={1029} fill="#57ff5f" arrow="up" />
      <Pin x={2508} y={986} fill="#ff3035" />
      <Pin x={2382} y={1131} fill="#ff3035" arrow="down" />
      <Pin x={2537} y={1138} fill="#57ff5f" />
      <Pin x={2006} y={1436} fill="#1f6cff" arrow="up" />
      <path d="M2339 900h38L2358.500 950z" fill="#fff" stroke="rgba(70,90,90,0.35)" strokeWidth="1.500" />
    </svg>
  );
}

function MapMenu({ icon, label, className }: { icon: string; label: string; className: string }) {
  return (
    <div className={`absolute top-[10px] flex items-center ${className}`}>
      <Icon name={icon} className="mb-[13px] size-[25px] text-[#2283ff]" />
      <span className="ml-[6px] text-[28px] font-light tracking-[-1px] text-[#3f9bff]">{label}</span>
      <Chevron className="mt-[8px] ml-[11px] h-[11px] w-[15px] text-[#6fc1ff]" />
    </div>
  );
}

const POPUP: [string, string][] = [
  ["", "Pickup"], ["", "Pickup (#6)"], ["", ""], ["Place: ", "San Francisco"], ["Assigned to: ", "Driver 3"],
  ["Status: ", "Success"], ["Scheduled: ", "10 May 9:10am-9:20am"], ["", ""],
  ["Product Code : ", "336"], ["Quantity Received: ", "2255"], ["Contact : ", "Mike Logan"],
];

function MapPanel() {
  return (
    <div className="relative h-[1323px] w-[720px] shrink-0 font-[Roboto]">
      <div className="h-[1323px] w-[720px] overflow-hidden rounded-tr-[8px] border-t border-r border-[#bccac8]">
        <MapCanvas />
      </div>

      {/* Map type switch, partly under the menu bar */}
      <div className="absolute top-[23px] left-[16px] flex h-[70px] w-[197px] rounded-[4px] bg-white text-[23px] shadow-[0_1px_4px_rgba(0,0,0,0.25)]">
        <div className="w-[79px] border-r border-[#e6e6e6] pt-[21px] pl-[17px] leading-[30px] font-medium text-black">Map</div>
        <div className="pt-[21px] pl-[18px] leading-[30px] text-[#565656]">Satellite</div>
      </div>
      <div className="absolute top-[2px] right-[2px] h-[58px] w-[688px] overflow-hidden bg-white/88 font-['Open_Sans']">
        <MapMenu icon="place" label="Jobs" className="left-[21px]" />
        <MapMenu icon="people" label="Teams" className="left-[164px]" />
        <MapMenu icon="car" label="Tracks" className="left-[333px]" />
        <MapMenu icon="locate" label="Locate" className="left-[500px]" />
        <MapMenu icon="layers" label="" className="top-[16px] left-[672px]" />
      </div>

      {/* Job info popup */}
      <div className="absolute top-[180px] left-[167px] h-[497px] w-[540px] rounded-[4px] bg-white pt-[17px] pl-[29px] shadow-[0_1px_5px_rgba(0,60,140,0.6)]">
        {POPUP.map(([label, value], i) => (
          <div key={i} className="h-[42px] text-[26px] leading-[42px] tracking-[0.6px] whitespace-pre text-[#263236]">
            <span className="font-light">{label}</span>
            <span className="font-bold">{value}</span>
          </div>
        ))}
        <svg viewBox="0 0 20 20" className="absolute top-[24px] right-[28px] size-[20px]" stroke="#93a3a3" strokeWidth="4.500"><path d="M2 2l16 16M18 2L2 18" /></svg>
      </div>

      {/* Hover tooltip */}
      <div className="absolute top-[807px] left-[431px] h-[41px] w-[316px] bg-[#e9ebe7] pl-[11px] font-[Inter] text-[23px] leading-[40px] tracking-[0.12px] whitespace-nowrap text-black shadow-[0_1px_3px_rgba(0,0,0,0.5)]">
        Pickup, San Francisco (#6)
      </div>

      {/* Street view and zoom controls */}
      <div className="absolute top-[1078px] left-[639px] flex h-[59px] w-[58px] items-center justify-center rounded-[4px] bg-white shadow-[0_1px_4px_rgba(0,0,0,0.3)]">
        <svg viewBox="0 0 24 42" className="mb-[4px] h-[42px] w-[24px]" fill="#f9b11e" stroke="#a57a2a" strokeWidth="1">
          <path d="M6 15h12l5 15l-4 1l-2 -5v15h-4V30h-2v11H7V26l-2 5l-4 -1z" />
          <circle cx="12" cy="7.500" r="6.500" />
          <path d="M8 15h8l-4 6z" fill="#ec6f1d" stroke="none" />
        </svg>
      </div>
      <div className="absolute top-[1158px] left-[639px] flex h-[116px] w-[58px] flex-col items-center rounded-[4px] bg-white pl-[3px] shadow-[0_1px_4px_rgba(0,0,0,0.3)]">
        <svg viewBox="0 0 22 22" className="mt-[18px] size-[22px]" stroke="#56686a" strokeWidth="5"><path d="M11 0v22M0 11h22" /></svg>
        <div className="mt-[18px] h-[2px] w-[40px] bg-[#dde4e6]" />
        <svg viewBox="0 0 22 6" className="mt-[25px] h-[6px] w-[22px]" stroke="#56686a" strokeWidth="5"><path d="M0 3h22" /></svg>
      </div>

      {/* Attribution */}
      <div className="absolute top-[1262px] left-[8px] text-[43px] leading-[60px] font-medium tracking-[-1.3px] [text-shadow:0_0_4px_#fff,0_0_4px_#fff]">
        <span className="text-[#3f83ff]">G</span><span className="text-[#ff2a4a]">o</span><span className="text-[#ffb81a]">o</span><span className="text-[#3f83ff]">g</span><span className="text-[#3ce62c]">l</span><span className="text-[#ff4060]">e</span>
      </div>
      <div className="absolute right-px bottom-0 flex h-[27px] w-[670px] items-center bg-white/60 text-[20px] leading-[27px] tracking-[0.25px] text-[#2e3b3d]">
        <span className="ml-[3px] w-[115px]">Map Data</span>
        <span className="w-[53px]">2 km</span>
        <span className="h-[13px] w-[136px] border-x-4 border-b-4 border-[#47585a] bg-white" />
        <span className="ml-[26px] w-[148px]">Terms of Use</span>
        <span className="whitespace-nowrap">Report a map error</span>
      </div>
    </div>
  );
}

export default function App() {
  return (
    <div className="flex h-[1668px] w-[2668px] flex-col overflow-hidden bg-[#f9f7f8] font-['Open_Sans',sans-serif]">
      <BrowserBar />
      <div className="flex min-h-0 flex-1">
        <Sidebar />
        <div className="flex min-w-0 flex-1 flex-col pl-[24px]">
          <div className="flex h-[147px] shrink-0 items-start">
            <h1 className="-ml-px pt-[8px] text-[72px] leading-[106px] font-light tracking-[-2.45px] text-black">Dispatch jobs &amp; optimize routes</h1>
            <div className="mt-[23px] mr-[18px] ml-auto flex gap-[23.5px]">
              <HeaderButton className="text-[32px]"><FaCogs /></HeaderButton>
              <HeaderButton className="text-[28px]"><FaBell /></HeaderButton>
              <HeaderButton className="text-[25px]"><FaQuestionCircle /></HeaderButton>
            </div>
          </div>
          <div className="flex min-h-0 flex-1">
            <div className="flex w-[1539px] shrink-0 flex-col">
              <Toolbar />
              <div className="flex min-h-0 flex-1 gap-[24px]">
                <Members />
                <JobsTable />
              </div>
            </div>
            <div className="flex w-[22px] shrink-0 flex-col border-t-2 border-r-2 border-l-3 border-[#b5c4c2] bg-linear-to-r from-[#fbfbfb] to-[#eceff0]">
              <div className="mt-[628px] ml-[6px] h-[72px] w-[3px] bg-[#b0bfbe]" />
            </div>
            <MapPanel />
          </div>
        </div>
      </div>
    </div>
  );
}
